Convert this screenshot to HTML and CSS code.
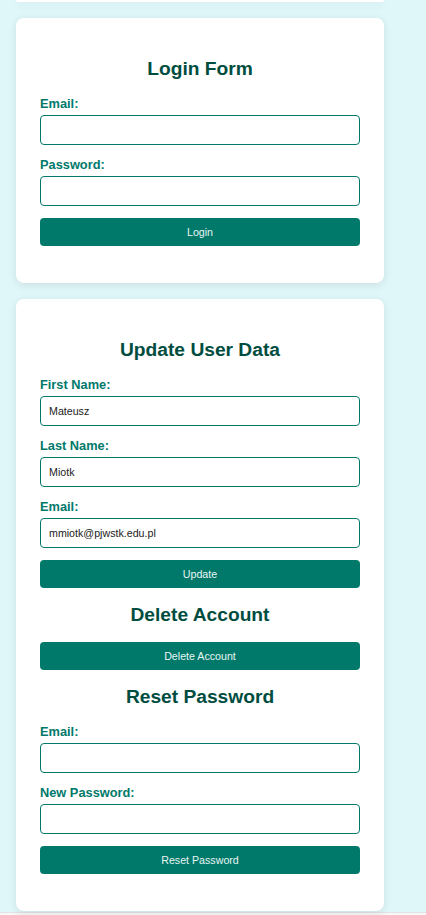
FILE: index.html
```html
<!DOCTYPE html>
<html lang="en">
<head>
<meta charset="utf-8">
<title>User Account</title>
<link rel="stylesheet" href="styles.css">
</head>
<body>
<main class="page">
  <div class="card card-stub"></div>

  <section class="card">
    <h2 class="title">Login Form</h2>
    <form class="form">
      <div class="field">
        <label class="label" for="login-email">Email:</label>
        <input class="input" id="login-email" type="email">
      </div>
      <div class="field">
        <label class="label" for="login-pass">Password:</label>
        <input class="input" id="login-pass" type="password">
      </div>
      <button class="btn" type="button">Login</button>
    </form>
  </section>

  <section class="card">
    <h2 class="title">Update User Data</h2>
    <form class="form">
      <div class="field">
        <label class="label" for="fn">First Name:</label>
        <input class="input" id="fn" type="text" value="Mateusz">
      </div>
      <div class="field">
        <label class="label" for="ln">Last Name:</label>
        <input class="input" id="ln" type="text" value="Miotk">
      </div>
      <div class="field">
        <label class="label" for="upd-email">Email:</label>
        <input class="input" id="upd-email" type="email" value="mmiotk@pjwstk.edu.pl">
      </div>
      <button class="btn" type="button">Update</button>
    </form>

    <h2 class="title">Delete Account</h2>
    <button class="btn" type="button">Delete Account</button>

    <h2 class="title">Reset Password</h2>
    <form class="form">
      <div class="field">
        <label class="label" for="rp-email">Email:</label>
        <input class="input" id="rp-email" type="email">
      </div>
      <div class="field">
        <label class="label" for="rp-new">New Password:</label>
        <input class="input" id="rp-new" type="password">
      </div>
      <button class="btn" type="button">Reset Password</button>
    </form>
  </section>
</main>
<footer class="footer"></footer>
</body>
</html>
```

FILE: styles.css
```css
* {
  box-sizing: border-box;
}

html,
body {
  margin: 0;
  padding: 0;
}

body {
  background: #e0f7fa;
  font-family: "Liberation Sans", Arial, sans-serif;
  color: #004d40;
}

.page {
  display: flex;
  flex-direction: column;
  gap: 16px;
  padding: 0 16px;
  width: 400px;
}

.card {
  width: 368px;
  background: #ffffff;
  border-radius: 8px;
  box-shadow: 0 2px 8px rgba(0, 0, 0, 0.1);
  padding: 24px;
}

.card-stub {
  height: 2px;
  padding: 0;
  border-radius: 0 0 8px 8px;
}

.title {
  margin: 16px 0;
  font-size: 19.2px;
  line-height: 22px;
  font-weight: bold;
  text-align: center;
  color: #004d40;
}

.form {
  margin: 0;
}

.field {
  display: flex;
  flex-direction: column;
  margin-bottom: 12px;
}

.label {
  font-size: 12.8px;
  line-height: 15px;
  font-weight: bold;
  color: #00796b;
  margin-bottom: 4px;
}

.input {
  width: 320px;
  height: 30px;
  border: 1px solid #00796b;
  border-radius: 4px;
  padding: 0 8px;
  font-family: "Liberation Sans", Arial, sans-serif;
  font-size: 10.67px;
  color: #222222;
  background: #ffffff;
}

.btn {
  display: block;
  width: 320px;
  height: 28px;
  border: none;
  border-radius: 4px;
  background: #00796b;
  color: #e8f5f3;
  font-family: "Liberation Sans", Arial, sans-serif;
  font-size: 10.67px;
  margin: 0 0 13px 0;
  padding: 0;
}

.footer {
  margin-top: 1px;
  height: 4px;
  border-top: 1px solid #e4e4e4;
  background: #f7f7f7;
}
```
